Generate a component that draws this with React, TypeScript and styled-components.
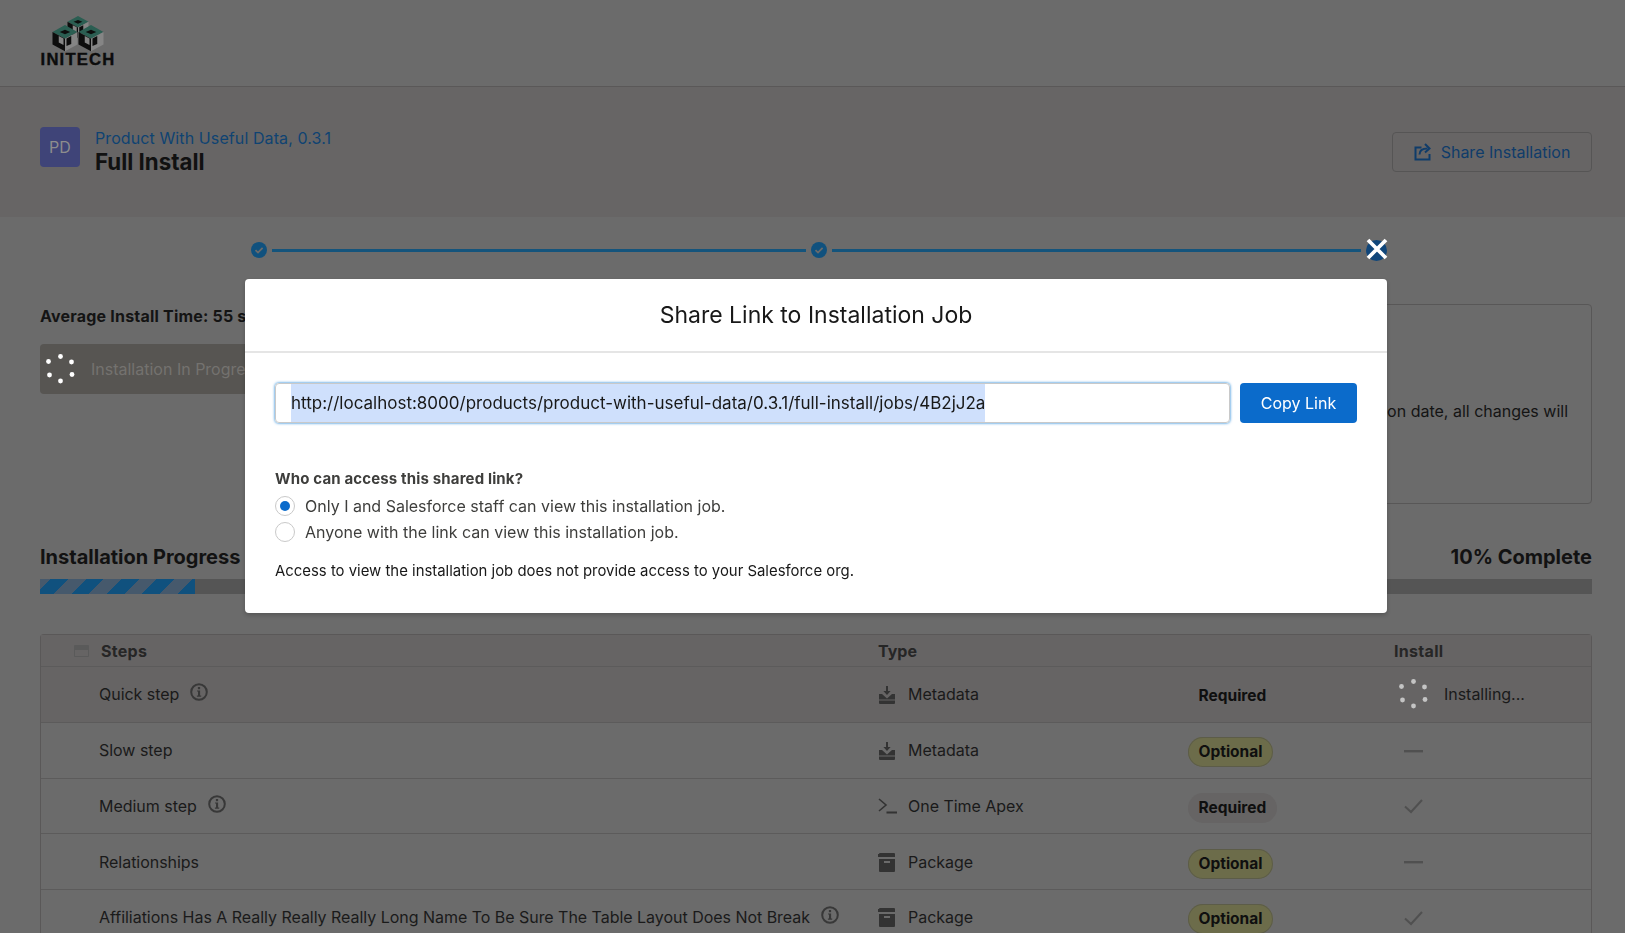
import React from "react";
import styled, { createGlobalStyle } from "styled-components";

const GlobalStyle = createGlobalStyle`
  html, body {
    margin: 0;
    padding: 0;
    height: 100%;
    overflow: hidden;
    background: #6b6b6b;
    font-family: Inter, "Liberation Sans", sans-serif;
    color: #141414;
  }
  * { box-sizing: border-box; }
`;

// one logo block: teal top, black left wall, grey right wall, a window in each wall
const LogoCube = ({ cx, t, w }: { cx: number; t: number; w: number }) => {
  const h = w * 0.55;
  const side = w;
  return (
    <g>
      <path d={`M${cx} ${t}L${cx + w} ${t + h}L${cx} ${t + 2 * h}L${cx - w} ${t + h}z`} fill="#2b5e52" />
      <path d={`M${cx - w} ${t + h}L${cx} ${t + 2 * h}V${t + 2 * h + side}L${cx - w} ${t + h + side}z`} fill="#0d0d0d" />
      <path d={`M${cx + w} ${t + h}L${cx} ${t + 2 * h}V${t + 2 * h + side}L${cx + w} ${t + h + side}z`} fill="#858585" />
      <path
        d={`M${cx - w * 0.5} ${t + h * 1.6}L${cx - w * 0.12} ${t + h * 1.95}V${t + h * 2.9}L${cx - w * 0.5} ${t + h * 2.55}z`}
        fill="#858585"
      />
      <path
        d={`M${cx + w * 0.12} ${t + h * 1.95}L${cx + w * 0.5} ${t + h * 1.6}V${t + h * 2.75}L${cx + w * 0.12} ${t + h * 3.05}z`}
        fill="#0d0d0d"
      />
      <path d={`M${cx} ${t + h * 0.7}L${cx + w * 0.42} ${t + h}L${cx} ${t + h * 1.35}L${cx - w * 0.42} ${t + h}z`} fill="#0d0d0d" />
    </g>
  );
};

const Logo = () => (
  <svg width="52" height="36" viewBox="0 0 52 36">
    <LogoCube cx={26} t={0} w={10.5} />
    <LogoCube cx={13} t={9} w={12.5} />
    <LogoCube cx={39} t={9} w={12.5} />
  </svg>
);

const ShareIcon = () => (
  <svg width="18" height="18" viewBox="0 0 18 18" fill="none" stroke="#0f3c6a" strokeWidth="2">
    <path d="M7.5 4.5H1.5v12h14V11" />
    <path d="M5.5 11.5c0-4 3-6 8-6" />
    <path d="M11 1l4.5 4.5L11 9.5" />
  </svg>
);

const CheckCircle = () => (
  <svg width="16" height="16" viewBox="0 0 16 16">
    <circle cx="8" cy="8" r="8" fill="#10517e" />
    <path d="M4.5 8.2 7 10.6l4.6-4.8" fill="none" stroke="#6b6b6b" strokeWidth="1.7" />
  </svg>
);

const Spinner = ({ color, size }: { color: string; size: number }) => (
  <svg width={size} height={size} viewBox="0 0 30 30">
    <circle cx="15.5" cy="2.5" r="2.4" fill={color} />
    <circle cx="26.5" cy="8" r="2.4" fill={color} />
    <circle cx="27" cy="20.5" r="2.4" fill={color} />
    <circle cx="15.5" cy="27" r="2.4" fill={color} />
    <circle cx="4.5" cy="21" r="2.4" fill={color} />
    <circle cx="3.5" cy="7.5" r="2.4" fill={color} />
  </svg>
);

const InfoIcon = () => (
  <svg width="18" height="18" viewBox="0 0 18 18" fill="none">
    <circle cx="9" cy="9" r="7.8" stroke="#383838" strokeWidth="2" />
    <rect x="7.9" y="4" width="2.2" height="2.2" fill="#383838" />
    <path d="M7 7.4h3.1v5.2h1.1v1.2H6.9v-1.2H8V8.6H7z" fill="#383838" />
  </svg>
);

const MetadataIcon = () => (
  <svg width="18" height="20" viewBox="0 0 18 20" fill="#333">
    <path d="M8 1h2v5h2.6L9 10 5.4 6H8z" />
    <path d="M1 9h3l5 4.5L14 9h3v5.5H1z" />
    <path d="M1 15.5h16V18a1 1 0 0 1-1 1H2a1 1 0 0 1-1-1z" />
  </svg>
);

const ApexIcon = () => (
  <svg width="20" height="18" viewBox="0 0 20 18" fill="none" stroke="#333" strokeWidth="1.6">
    <path d="M1 2l7 6-7 6" />
    <path d="M8.5 15.5H19" strokeWidth="2" />
  </svg>
);

const PackageIcon = () => (
  <svg width="18" height="19" viewBox="0 0 18 19" fill="#333">
    <path d="M1 1a1 1 0 0 1 1-1h14a1 1 0 0 1 1 1v3H0V1z" />
    <path d="M1 6h16v12a1 1 0 0 1-1 1H2a1 1 0 0 1-1-1zm5 2v2h6V8z" fillRule="evenodd" />
  </svg>
);

const CheckIcon = () => (
  <svg width="19" height="15" viewBox="0 0 19 15" fill="none" stroke="#505050" strokeWidth="2">
    <path d="M1 7.5l6 5.5L18 1" />
  </svg>
);

const DashIcon = () => (
  <svg width="19" height="3" viewBox="0 0 19 3">
    <rect width="19" height="2.4" fill="#505050" />
  </svg>
);

const CloseIcon = () => (
  <svg width="22" height="22" viewBox="0 0 22 22" fill="none" stroke="#fff" strokeWidth="3.8">
    <path d="M2 2l18 18M20 2 2 20" />
  </svg>
);

type Step = {
  name: string;
  info?: boolean;
  kind: "Metadata" | "One Time Apex" | "Package";
  required: boolean;
  status: "installing" | "skip" | "done";
};

const steps: Step[] = [
  { name: "Quick step", info: true, kind: "Metadata", required: true, status: "installing" },
  { name: "Slow step", kind: "Metadata", required: false, status: "skip" },
  { name: "Medium step", info: true, kind: "One Time Apex", required: true, status: "done" },
  { name: "Relationships", kind: "Package", required: false, status: "skip" },
  {
    name: "Affiliations Has A Really Really Really Long Name To Be Sure The Table Layout Does Not Break",
    info: true,
    kind: "Package",
    required: false,
    status: "done",
  },
];

export default function App() {
  return (
    <>
      <GlobalStyle />
      <TopBar>
        <LogoMark>
          <Logo />
          <LogoText>INITECH</LogoText>
        </LogoMark>
      </TopBar>
      <PageHeader>
        <HeaderLeft>
          <Avatar>PD</Avatar>
          <div>
            <ProductLink>Product With Useful Data, 0.3.1</ProductLink>
            <PlanTitle>Full Install</PlanTitle>
          </div>
        </HeaderLeft>
        <OutlineButton>
          <ShareIcon />
          Share Installation
        </OutlineButton>
      </PageHeader>
      <Stepper>
        <CheckCircle />
        <StepLine $weight={534} />
        <CheckCircle />
        <StepLine $weight={529} />
        <StepDot />
      </Stepper>
      <Summary>
        <SummaryLeft>
          <AverageTime>Average Install Time: 55 seconds.</AverageTime>
          <DisabledButton>
            <Spinner color="#ffffff" size={30} />
            <span>Installation In Progress</span>
          </DisabledButton>
        </SummaryLeft>
        <WarningCard>
          <p>on date, all changes will</p>
        </WarningCard>
      </Summary>
      <ProgressHead>
        <h2>Installation Progress</h2>
        <h2>10% Complete</h2>
      </ProgressHead>
      <ProgressTrack>
        <ProgressFill />
      </ProgressTrack>
      <StepTable>
        <TableHead>
          <StepsHead>
            <CollapseBox />
            Steps
          </StepsHead>
          <span>Type</span>
          <span />
          <InstallHead>Install</InstallHead>
        </TableHead>
        {steps.map((step, i) => (
          <TableRow key={step.name} $active={i === 0}>
            <NameCell>
              {step.name}
              {step.info && <InfoIcon />}
            </NameCell>
            <TypeCell>
              <TypeIconBox>
                {step.kind === "Metadata" && <MetadataIcon />}
                {step.kind === "One Time Apex" && <ApexIcon />}
                {step.kind === "Package" && <PackageIcon />}
              </TypeIconBox>
              {step.kind}
            </TypeCell>
            <BadgeCell>
              <Badge $optional={!step.required} $flat={i === 0}>
                {step.required ? "Required" : "Optional"}
              </Badge>
            </BadgeCell>
            <StatusCell $wide={step.status === "installing"}>
              {step.status === "installing" && (
                <>
                  <Spinner color="#c4c4c4" size={30} />
                  <InstallingText>Installing...</InstallingText>
                </>
              )}
              {step.status === "skip" && <DashIcon />}
              {step.status === "done" && <CheckIcon />}
            </StatusCell>
          </TableRow>
        ))}
      </StepTable>
      <Modal>
        <CloseButton>
          <CloseIcon />
        </CloseButton>
        <ModalTitle>Share Link to Installation Job</ModalTitle>
        <ModalBody>
          <LinkRow>
            <LinkField>
              <Selected>http://localhost:8000/products/product-with-useful-data/0.3.1/full-install/jobs/4B2jJ2a</Selected>
            </LinkField>
            <CopyButton>Copy Link</CopyButton>
          </LinkRow>
          <AccessLegend>Who can access this shared link?</AccessLegend>
          <RadioGroup>
            <RadioRow>
              <Radio $checked />
              Only I and Salesforce staff can view this installation job.
            </RadioRow>
            <RadioRow>
              <Radio />
              Anyone with the link can view this installation job.
            </RadioRow>
          </RadioGroup>
          <AccessNote>Access to view the installation job does not provide access to your Salesforce org.</AccessNote>
        </ModalBody>
      </Modal>
    </>
  );
}

const TopBar = styled.header`
  height: 87px;
  padding: 16px 40px 0;
  border-bottom: 1px solid #5a5858;
  background: #6b6b6b;
`;

const LogoMark = styled.div`
  display: flex;
  flex-direction: column;
  align-items: center;
  width: 76px;

  svg {
    display: block;
  }
`;

const LogoText = styled.div`
  font-family: "Liberation Sans", sans-serif;
  font-weight: 700;
  font-size: 16.6px;
  line-height: 14px;
  letter-spacing: 1.2px;
  margin-top: 1px;
  color: #0c0c0c;
  -webkit-text-stroke: 0.4px #0c0c0c;
`;

const PageHeader = styled.section`
  height: 130px;
  padding: 40px 33px 0 40px;
  display: flex;
  justify-content: space-between;
  align-items: flex-start;
  background: #676565;
`;

const HeaderLeft = styled.div`
  display: flex;
  gap: 15px;
`;

const Avatar = styled.div`
  width: 40px;
  height: 40px;
  border-radius: 4px;
  background: #3f4478;
  color: #8d8d8d;
  font-size: 16px;
  display: flex;
  align-items: center;
  justify-content: center;
`;

const ProductLink = styled.div`
  color: #0f4372;
  font-size: 16px;
  line-height: 20px;
  letter-spacing: 0.1px;
  margin-top: 1px;
`;

const PlanTitle = styled.div`
  font-size: 22.3px;
  font-weight: 700;
  line-height: 27px;
  color: #111;
`;

const OutlineButton = styled.div`
  width: 200px;
  height: 40px;
  margin-top: 5px;
  border: 1px solid #565555;
  border-radius: 4px;
  display: flex;
  align-items: center;
  justify-content: center;
  gap: 9px;
  color: #0f3c6a;
  font-size: 16px;
`;

const Stepper = styled.div`
  height: 66px;
  padding: 0 238px 0 251px;
  display: flex;
  align-items: center;
  gap: 5px;
`;

const StepLine = styled.div<{ $weight: number }>`
  flex: ${(p) => p.$weight} 1 0;
  height: 3px;
  background: #14547c;
`;

const StepDot = styled.div`
  width: 21px;
  height: 21px;
  border-radius: 50%;
  background: #10467a;
`;

const Summary = styled.section`
  margin: 21px 33px 0 40px;
  display: flex;
  justify-content: space-between;
  height: 200px;
`;

const SummaryLeft = styled.div`
  width: 500px;
`;

const AverageTime = styled.div`
  margin-top: 2px;
  font-size: 16px;
  line-height: 20px;
  font-weight: 700;
  letter-spacing: 0.2px;
  color: #141414;
`;

const DisabledButton = styled.div`
  margin-top: 18px;
  width: 320px;
  height: 50px;
  border-radius: 4px;
  background: #575552;
  color: #74726f;
  font-size: 16px;
  display: flex;
  align-items: center;
  gap: 16px;
  padding-left: 5px;
`;

const WarningCard = styled.div`
  width: 760px;
  border: 1px solid #585757;
  border-radius: 4px;
  padding: 95px 23px 0;
  font-size: 16px;

  p {
    margin: 0;
    line-height: 22px;
    text-align: right;
    color: #141414;
  }
`;

const ProgressHead = styled.div`
  margin: 40px 33px 0 40px;
  display: flex;
  justify-content: space-between;

  h2 {
    margin: 0;
    font-size: 20px;
    line-height: 26px;
    font-weight: 700;
    color: #121212;
  }
`;

const ProgressTrack = styled.div`
  margin: 9px 33px 0 40px;
  height: 15px;
  background: #555;
`;

const ProgressFill = styled.div`
  width: 155px;
  height: 100%;
  background: repeating-linear-gradient(
    -45deg,
    #10517e 0 12.5px,
    #46596c 12.5px 25px
  );
`;

const StepTable = styled.section`
  margin: 40px 33px 0 40px;
  border: 1px solid #5a5858;
  border-bottom: none;
  border-radius: 4px 4px 0 0;
`;

const TableRowBase = styled.div`
  display: grid;
  grid-template-columns: 837px 310px 206px 1fr;
  align-items: center;
`;

const TableHead = styled(TableRowBase)`
  height: 32px;
  background: #666464;
  border-bottom: 1px solid #5c5b5b;
  font-weight: 700;
  font-size: 16px;
  color: #262626;
`;

const StepsHead = styled.div`
  display: flex;
  align-items: center;
  gap: 12px;
  padding-left: 33px;
  letter-spacing: 0.3px;
`;

const CollapseBox = styled.span`
  width: 15px;
  height: 12px;
  border: 1px solid #5a5a5a;
  border-top: 5px solid #5a5a5a;
  border-radius: 1px;
`;

const InstallHead = styled.span`
  letter-spacing: 0.3px;
`;

const TableRow = styled(TableRowBase)<{ $active?: boolean }>`
  height: 55.75px;
  background: ${(p) => (p.$active ? "#666464" : "#6b6b6b")};
  border-bottom: 1px solid #5c5b5b;
  font-size: 16px;
  letter-spacing: -0.03px;
  color: #1a1a1a;
`;

const NameCell = styled.div`
  display: flex;
  align-items: center;
  gap: 11px;
  padding-left: 58px;

  svg {
    position: relative;
    top: -2px;
  }
`;

const TypeCell = styled.div`
  display: flex;
  align-items: center;
`;

const TypeIconBox = styled.span`
  width: 30px;
  display: flex;
  align-items: center;
  padding-top: 1px;
`;

const BadgeCell = styled.div`
  padding-top: 4px;
`;

const Badge = styled.span<{ $optional?: boolean; $flat?: boolean }>`
  display: inline-block;
  padding: 0 10.5px;
  height: 30px;
  line-height: 30px;
  font-size: 15.5px;
  font-weight: 700;
  letter-spacing: 0;
  border-radius: 15px;
  color: #0f0f0f;
  background: ${(p) => (p.$flat ? "transparent" : p.$optional ? "#6c6c4a" : "#666464")};
  box-shadow: ${(p) => (p.$optional ? "inset 0 0 0 1px #5c5c48" : "none")};
`;

const StatusCell = styled.div<{ $wide?: boolean }>`
  display: flex;
  align-items: center;
  padding-left: ${(p) => (p.$wide ? "4px" : "10px")};
  padding-top: ${(p) => (p.$wide ? "0" : "2px")};
`;

const InstallingText = styled.span`
  margin-left: 16px;
  color: #1a1a1a;
`;

const Modal = styled.div`
  position: fixed;
  left: 245px;
  top: 279px;
  width: 1142px;
  height: 334px;
  background: #fff;
  border-radius: 4px;
  box-shadow: 0 2px 4px rgba(0, 0, 0, 0.2);
`;

const CloseButton = styled.div`
  position: absolute;
  right: -1px;
  top: -41px;
  line-height: 0;
`;

const ModalTitle = styled.h2`
  margin: 0;
  height: 74px;
  border-bottom: 2px solid #e5e5e5;
  font-size: 23px;
  font-weight: 400;
  line-height: 72px;
  text-align: center;
  color: #181818;
`;

const ModalBody = styled.div`
  padding: 30px 30px 0;
`;

const LinkRow = styled.div`
  display: flex;
  gap: 10px;
`;

const LinkField = styled.div`
  width: 955px;
  height: 40px;
  border: 1px solid #c9c9c9;
  border-radius: 4px;
  padding-left: 15px;
  box-shadow: 0 0 3px #0176d3;
  overflow: hidden;
  font-size: 17px;
  display: flex;
`;

const Selected = styled.span`
  background: #cfe0fc;
  line-height: 38px;
  color: #181818;
  white-space: nowrap;
`;

const CopyButton = styled.div`
  width: 117px;
  height: 40px;
  background: #0b6bcb;
  border-radius: 4px;
  color: #fff;
  font-size: 16px;
  display: flex;
  align-items: center;
  justify-content: center;
`;

const AccessLegend = styled.div`
  margin-top: 46px;
  font-size: 15px;
  line-height: 20px;
  font-weight: 700;
  letter-spacing: 0.15px;
  color: #3e3e3c;
`;

const RadioGroup = styled.div`
  margin-top: 4px;
`;

const RadioRow = styled.div`
  height: 26px;
  display: flex;
  align-items: center;
  gap: 10px;
  font-size: 16px;
  color: #3e3e3c;
`;

const Radio = styled.span<{ $checked?: boolean }>`
  width: 20px;
  height: 20px;
  border-radius: 50%;
  border: 1px solid #c9c9c9;
  display: flex;
  align-items: center;
  justify-content: center;

  &::after {
    content: "";
    width: 10px;
    height: 10px;
    border-radius: 50%;
    background: ${(p) => (p.$checked ? "#0b6bcb" : "transparent")};
  }
`;

const AccessNote = styled.p`
  margin: 16px 0 0;
  font-size: 14.9px;
  line-height: 20px;
  color: #181818;
`;
